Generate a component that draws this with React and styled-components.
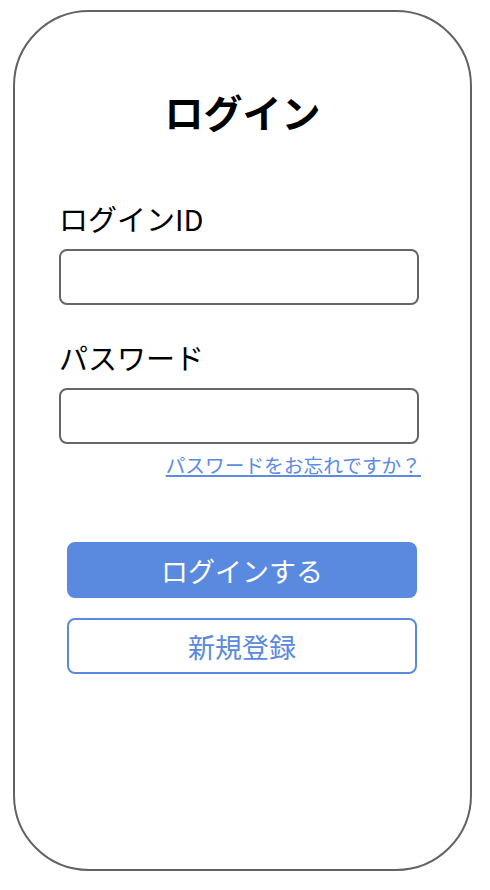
import React from 'react'
import styled, { createGlobalStyle } from 'styled-components'

const GlobalStyle = createGlobalStyle`
  body {
    margin: 0;
    background: #ffffff;
    font-family: "Noto Sans CJK JP", "Noto Sans", sans-serif;
  }
`

const colors = {
  border: '#626262',
  blue: '#5a89e0',
  link: '#5b8be2',
  text: '#000000',
}

const Page = styled.div`
  padding: 10px 0 0 13px;
`

const Card = styled.div`
  box-sizing: border-box;
  width: 459px;
  height: 861px;
  border: 2px solid ${colors.border};
  border-radius: 76px;
  padding: 80px 0 0 44px;
  display: flex;
  flex-direction: column;
`

const Title = styled.h1`
  margin: 0 0 73px -44px;
  font-size: 39px;
  line-height: 39px;
  font-weight: 700;
  text-align: center;
  color: ${colors.text};
`

const Field = styled.div`
  display: flex;
  flex-direction: column;
  width: 360px;
  margin-bottom: ${(p) => p.gap || '0'};
`

const Label = styled.label`
  font-size: 29px;
  line-height: 29px;
  color: ${colors.text};
  margin-bottom: 16px;
`

const Input = styled.input`
  box-sizing: border-box;
  height: 56px;
  width: 360px;
  border: 2px solid #666666;
  border-radius: 8px;
  background: #ffffff;
  font-size: 20px;
  padding: 0 12px;
  outline: none;
`

const ForgotLink = styled.a`
  align-self: flex-end;
  margin-top: 11px;
  font-size: 19.7px;
  line-height: 20px;
  color: ${colors.link};
  text-decoration: underline;
  text-decoration-thickness: 1.5px;
  text-underline-offset: 2px;
  margin-right: -2px;
  cursor: pointer;
`

const Button = styled.button`
  box-sizing: border-box;
  width: 350px;
  height: 56px;
  margin-left: 8px;
  border-radius: 8px;
  font-family: inherit;
  font-size: 27px;
  cursor: pointer;
  border: 2px solid ${colors.blue};
  background: ${(p) => (p.primary ? colors.blue : '#ffffff')};
  color: ${(p) => (p.primary ? '#ffffff' : colors.blue)};
  margin-top: ${(p) => p.top || '0'};
`

const App = () => {
  return (
    <Page>
      <GlobalStyle />
      <Card>
        <Title>ログイン</Title>
        <Field gap="38px">
          <Label>ログインID</Label>
          <Input type="text" />
        </Field>
        <Field>
          <Label>パスワード</Label>
          <Input type="password" />
          <ForgotLink>パスワードをお忘れですか？</ForgotLink>
        </Field>
        <Button primary top="67px">ログインする</Button>
        <Button top="20px">新規登録</Button>
      </Card>
    </Page>
  )
}

export default App
